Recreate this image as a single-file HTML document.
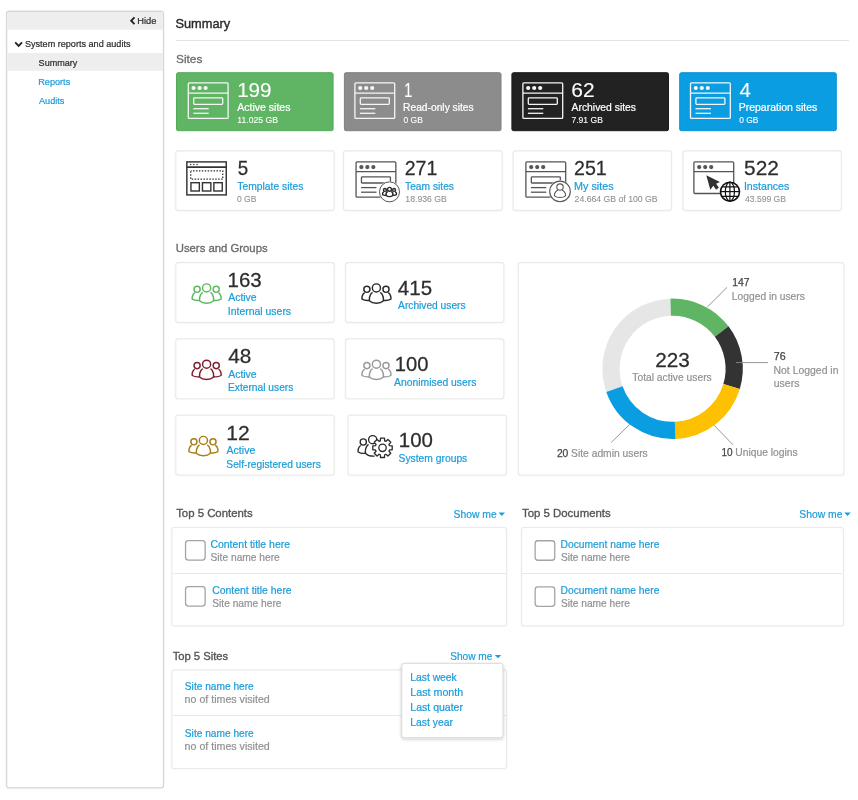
<!DOCTYPE html>
<html>
<head>
<meta charset="utf-8">
<title>Summary</title>
<style>
*{box-sizing:border-box;margin:0;padding:0}
html,body{width:858px;height:800px;overflow:hidden;background:#fff}
body{font-family:"Liberation Sans",sans-serif;color:#333;position:relative}
.a{position:absolute}
.t{position:absolute;white-space:nowrap;line-height:1;transform-origin:0 0;-webkit-text-stroke:.22px}
.hr{position:absolute;height:1px;background:#e8e8e8}
svg{position:absolute;overflow:visible}
</style>
</head>
<body><div id="wrap" style="position:absolute;left:0;top:0;width:858px;height:800px;will-change:transform">

<svg style="left:0;top:0" width="858" height="800"><rect x="6.7" y="11.75" width="156.7" height="776.3" rx="2.6" fill="none" stroke="#f3f3f3" stroke-width="2.4"/><rect x="6.7" y="11.4" width="156.7" height="776.4" rx="2.4" fill="#fff" stroke="#d4d4d4" stroke-width="1.1"/><path d="M7.25 29.7 V13.6 Q7.25 11.95 8.9 11.95 H161.2 Q162.85 11.95 162.85 13.6 V29.7 Z" fill="#eeeeee"/><rect x="7.25" y="52.9" width="155.6" height="17.9" fill="#eeeeee"/></svg>
<svg style="left:0;top:0" width="858" height="800"><g transform="translate(129,16)"><path d="M5.5 1.3 L2.1 4.75 L5.5 8.2" fill="none" stroke="#222" stroke-width="1.8"/></g></svg>
<div class="t" style="left:137px;top:16px;font-size:9.8px;color:#2d2d2d;transform:translate(0.24px,0) scaleX(0.9463);">Hide</div>
<svg style="left:0;top:0" width="858" height="800"><g transform="translate(14,40.3)"><path d="M1.2 2 L4.6 5.6 L8 2" fill="none" stroke="#222" stroke-width="1.8"/></g></svg>
<div class="t" style="left:24px;top:39px;font-size:9.8px;color:#2d2d2d;transform:translate(0.89px,0) scaleX(0.9280);">System reports and audits</div>
<div class="t" style="left:38px;top:58px;font-size:9.8px;color:#2d2d2d;transform:translate(0.59px,0) scaleX(0.9261);">Summary</div>
<div class="t" style="left:38px;top:77px;font-size:9.8px;color:#1b9dd9;transform:translate(0.25px,0) scaleX(0.9319);">Reports</div>
<div class="t" style="left:38px;top:96px;font-size:9.8px;color:#1b9dd9;transform:translate(0.98px,0) scaleX(0.9306);">Audits</div>
<div class="t" style="left:175px;top:17px;font-size:13.2px;color:#2b2b2b;transform:translate(0.42px,0) scaleX(0.9705);-webkit-text-stroke:.4px #2b2b2b;">Summary</div>
<div class="hr" style="left:176px;top:40px;width:673px;background:#e3e3e3"></div>
<div class="t" style="left:176px;top:54px;font-size:11.8px;color:#6a6a6a;transform:translate(0.06px,0) scaleX(1.0012);-webkit-text-stroke:.3px #6a6a6a;">Sites</div>
<svg style="left:0;top:0" width="858" height="800"><rect x="176.50" y="72.7" width="156.6" height="58" rx="1.6" fill="#60b565" stroke="#52ac57" stroke-width="1"/></svg>
<svg style="left:0;top:0" width="858" height="800"><g transform="translate(187.70,82.20)"><rect x=".6" y=".6" width="39.8" height="35.6" rx="1" fill="none" stroke="#f6f6f6" stroke-width="1.30"/><line x1=".6" y1="11.0" x2="40.4" y2="11.0" stroke="#f6f6f6" stroke-width="1.30"/><circle cx="5.9" cy="5.8" r="2.1" fill="#f6f6f6"/><circle cx="11.9" cy="5.8" r="2.1" fill="#f6f6f6"/><circle cx="17.9" cy="5.8" r="2.1" fill="#f6f6f6"/><rect x="6" y="15.70" width="29" height="6.50" rx=".8" fill="none" stroke="#f6f6f6" stroke-width="1.30"/><line x1="5.6" y1="26.50" x2="21" y2="26.50" stroke="#f6f6f6" stroke-width="1.30"/><line x1="5.6" y1="31.10" x2="21" y2="31.10" stroke="#f6f6f6" stroke-width="1.30"/></g></svg>
<div class="t" style="left:237px;top:79px;font-size:21px;color:#fff;transform:translate(0.13px,0) scaleX(0.9833);-webkit-text-stroke:.1px;">199</div>
<div class="t" style="left:237px;top:102px;font-size:11px;color:#fff;transform:translate(0.28px,0) scaleX(0.9564);">Active sites</div>
<div class="t" style="left:237px;top:116px;font-size:9px;color:#fff;transform:translate(0.34px,0) scaleX(0.9625);-webkit-text-stroke:.1px;">11.025 GB</div>
<svg style="left:0;top:0" width="858" height="800"><rect x="344.40" y="72.7" width="156.6" height="58" rx="1.6" fill="#8c8c8c" stroke="#808080" stroke-width="1"/></svg>
<svg style="left:0;top:0" width="858" height="800"><g transform="translate(354.30,82.20)"><rect x=".6" y=".6" width="39.8" height="35.6" rx="1" fill="none" stroke="#f6f6f6" stroke-width="1.30"/><line x1=".6" y1="11.0" x2="40.4" y2="11.0" stroke="#f6f6f6" stroke-width="1.30"/><circle cx="5.9" cy="5.8" r="2.1" fill="#f6f6f6"/><circle cx="11.9" cy="5.8" r="2.1" fill="#f6f6f6"/><circle cx="17.9" cy="5.8" r="2.1" fill="#f6f6f6"/><rect x="6" y="15.70" width="29" height="6.50" rx=".8" fill="none" stroke="#f6f6f6" stroke-width="1.30"/><line x1="5.6" y1="26.50" x2="21" y2="26.50" stroke="#f6f6f6" stroke-width="1.30"/><line x1="5.6" y1="31.10" x2="21" y2="31.10" stroke="#f6f6f6" stroke-width="1.30"/></g></svg>
<div class="t" style="left:403px;top:79px;font-size:21px;color:#fff;transform:translate(0.95px,0) scaleX(0.7179);-webkit-text-stroke:.1px;">1</div>
<div class="t" style="left:403px;top:102px;font-size:11px;color:#fff;transform:translate(0.06px,0) scaleX(0.9314);">Read-only sites</div>
<div class="t" style="left:403px;top:116px;font-size:9px;color:#fff;transform:translate(0.57px,0) scaleX(0.9399);-webkit-text-stroke:.1px;">0 GB</div>
<svg style="left:0;top:0" width="858" height="800"><rect x="511.90" y="72.7" width="156.6" height="58" rx="1.6" fill="#222222" stroke="#1c1c1c" stroke-width="1"/></svg>
<svg style="left:0;top:0" width="858" height="800"><g transform="translate(522.30,82.20)"><rect x=".6" y=".6" width="39.8" height="35.6" rx="1" fill="none" stroke="#f6f6f6" stroke-width="1.30"/><line x1=".6" y1="11.0" x2="40.4" y2="11.0" stroke="#f6f6f6" stroke-width="1.30"/><circle cx="5.9" cy="5.8" r="2.1" fill="#f6f6f6"/><circle cx="11.9" cy="5.8" r="2.1" fill="#f6f6f6"/><circle cx="17.9" cy="5.8" r="2.1" fill="#f6f6f6"/><rect x="6" y="15.70" width="29" height="6.50" rx=".8" fill="none" stroke="#f6f6f6" stroke-width="1.30"/><line x1="5.6" y1="26.50" x2="21" y2="26.50" stroke="#f6f6f6" stroke-width="1.30"/><line x1="5.6" y1="31.10" x2="21" y2="31.10" stroke="#f6f6f6" stroke-width="1.30"/></g></svg>
<div class="t" style="left:571px;top:79px;font-size:21px;color:#fff;transform:translate(0.34px,0) scaleX(0.9983);-webkit-text-stroke:.1px;">62</div>
<div class="t" style="left:571px;top:102px;font-size:11px;color:#fff;transform:translate(0.58px,0) scaleX(0.9405);">Archived sites</div>
<div class="t" style="left:571px;top:116px;font-size:9px;color:#fff;transform:translate(0.46px,0) scaleX(0.9506);-webkit-text-stroke:.1px;">7.91 GB</div>
<svg style="left:0;top:0" width="858" height="800"><rect x="679.70" y="72.7" width="156.6" height="58" rx="1.6" fill="#0a9de1" stroke="#0a93d3" stroke-width="1"/></svg>
<svg style="left:0;top:0" width="858" height="800"><g transform="translate(689.90,82.20)"><rect x=".6" y=".6" width="39.8" height="35.6" rx="1" fill="none" stroke="#f6f6f6" stroke-width="1.30"/><line x1=".6" y1="11.0" x2="40.4" y2="11.0" stroke="#f6f6f6" stroke-width="1.30"/><circle cx="5.9" cy="5.8" r="2.1" fill="#f6f6f6"/><circle cx="11.9" cy="5.8" r="2.1" fill="#f6f6f6"/><circle cx="17.9" cy="5.8" r="2.1" fill="#f6f6f6"/><rect x="6" y="15.70" width="29" height="6.50" rx=".8" fill="none" stroke="#f6f6f6" stroke-width="1.30"/><line x1="5.6" y1="26.50" x2="21" y2="26.50" stroke="#f6f6f6" stroke-width="1.30"/><line x1="5.6" y1="31.10" x2="21" y2="31.10" stroke="#f6f6f6" stroke-width="1.30"/></g></svg>
<div class="t" style="left:739px;top:79px;font-size:21px;color:#fff;transform:translate(0.43px,0) scaleX(0.9733);-webkit-text-stroke:.1px;">4</div>
<div class="t" style="left:738px;top:102px;font-size:11px;color:#fff;transform:translate(0.74px,0) scaleX(0.9515);">Preparation sites</div>
<div class="t" style="left:739px;top:116px;font-size:9px;color:#fff;transform:translate(0.27px,0) scaleX(0.9297);-webkit-text-stroke:.1px;">0 GB</div>
<svg style="left:0;top:0" width="858" height="800"><rect x="175.80" y="151.25" width="158.26" height="59.50" rx="2.6" fill="#fff" stroke="#f8f8f8" stroke-width="2.4"/><rect x="175.80" y="150.90" width="158.26" height="59.50" rx="2.4" fill="#fff" stroke="#eaeaea" stroke-width="1.1"/></svg>
<svg style="left:0;top:0" width="858" height="800"><rect x="343.60" y="151.25" width="158.56" height="59.50" rx="2.6" fill="#fff" stroke="#f8f8f8" stroke-width="2.4"/><rect x="343.60" y="150.90" width="158.56" height="59.50" rx="2.4" fill="#fff" stroke="#eaeaea" stroke-width="1.1"/></svg>
<svg style="left:0;top:0" width="858" height="800"><rect x="513.20" y="151.25" width="158.20" height="59.50" rx="2.6" fill="#fff" stroke="#f8f8f8" stroke-width="2.4"/><rect x="513.20" y="150.90" width="158.20" height="59.50" rx="2.4" fill="#fff" stroke="#eaeaea" stroke-width="1.1"/></svg>
<svg style="left:0;top:0" width="858" height="800"><rect x="683.00" y="151.25" width="158.30" height="59.50" rx="2.6" fill="#fff" stroke="#f8f8f8" stroke-width="2.4"/><rect x="683.00" y="150.90" width="158.30" height="59.50" rx="2.4" fill="#fff" stroke="#eaeaea" stroke-width="1.1"/></svg>
<svg style="left:0;top:0" width="858" height="800"><g transform="translate(186.05,161.1)"><rect x=".8" y=".8" width="39.4" height="33" fill="none" stroke="#333" stroke-width="1.45"/><line x1=".8" y1="6" x2="40.2" y2="6" stroke="#333" stroke-width="1.7"/><circle cx="4.6" cy="3.3" r=".75" fill="#333"/><circle cx="7.8" cy="3.3" r=".75" fill="#333"/><circle cx="11.0" cy="3.3" r=".75" fill="#333"/><rect x="4.7" y="9.8" width="32" height="8.3" fill="none" stroke="#333" stroke-width="1.25" stroke-dasharray="1.5 1.44" stroke-dashoffset=".7"/><rect x="4.9" y="21.6" width="8.4" height="8.3" fill="none" stroke="#333" stroke-width="1.4"/><rect x="16.4" y="21.6" width="8.4" height="8.3" fill="none" stroke="#333" stroke-width="1.4"/><rect x="27.8" y="21.6" width="8.4" height="8.3" fill="none" stroke="#333" stroke-width="1.4"/></g></svg>
<svg style="left:0;top:0" width="858" height="800"><g transform="translate(355.45,161.30)"><rect x=".6" y=".6" width="39.8" height="35.3" rx="1" fill="none" stroke="#555" stroke-width="1.30"/><line x1=".6" y1="10.4" x2="40.4" y2="10.4" stroke="#555" stroke-width="1.30"/><circle cx="5.9" cy="5.8" r="2.1" fill="#555"/><circle cx="11.9" cy="5.8" r="2.1" fill="#555"/><circle cx="17.9" cy="5.8" r="2.1" fill="#555"/><rect x="6" y="15.50" width="29" height="6.20" rx=".8" fill="none" stroke="#555" stroke-width="1.30"/><line x1="5.6" y1="26.30" x2="21" y2="26.30" stroke="#555" stroke-width="1.30"/><line x1="5.6" y1="30.90" x2="21" y2="30.90" stroke="#555" stroke-width="1.30"/><circle cx="34.05" cy="30.55" r="10.7" fill="#fff"/><circle cx="34.05" cy="30.55" r="10" fill="#fff" stroke="#555" stroke-width="1"/><g transform="translate(26.25,25.25) scale(.48)"><circle cx="16.2" cy="5.7" r="4.05" fill="#fff" stroke="#2a2a2a" stroke-width="2.9"/><circle cx="6.7" cy="7.1" r="3.05" fill="none" stroke="#2a2a2a" stroke-width="2.9"/><circle cx="25.8" cy="7.1" r="3.05" fill="none" stroke="#2a2a2a" stroke-width="2.9"/><path d="M4.4 10.5 C2 12 1.4 15.4 1.9 17 C3.8 18.2 6.6 18.6 9.4 18.2" fill="none" stroke="#2a2a2a" stroke-width="2.9"/><path d="M28.1 10.5 C30.5 12 31.1 15.4 30.6 17 C28.7 18.2 25.9 18.6 23.1 18.2" fill="none" stroke="#2a2a2a" stroke-width="2.9"/><path d="M12.3 10.2 C9.2 12.3 8.8 16.8 9.4 18.8 C12.4 21.7 20 21.7 23 18.8 C23.6 16.8 23.2 12.3 20.1 10.2" fill="none" stroke="#2a2a2a" stroke-width="2.9"/></g></g></svg>
<div class="t" style="left:404px;top:157px;font-size:21px;color:#2d2d2d;transform:translate(0.72px,0) scaleX(0.9285);-webkit-text-stroke:.27px;">271</div>
<svg style="left:0;top:0" width="858" height="800"><g transform="translate(525.30,161.30)"><rect x=".6" y=".6" width="39.8" height="35.3" rx="1" fill="none" stroke="#555" stroke-width="1.30"/><line x1=".6" y1="10.4" x2="40.4" y2="10.4" stroke="#555" stroke-width="1.30"/><circle cx="5.9" cy="5.8" r="2.1" fill="#555"/><circle cx="11.9" cy="5.8" r="2.1" fill="#555"/><circle cx="17.9" cy="5.8" r="2.1" fill="#555"/><rect x="6" y="15.50" width="29" height="6.20" rx=".8" fill="none" stroke="#555" stroke-width="1.30"/><line x1="5.6" y1="26.30" x2="21" y2="26.30" stroke="#555" stroke-width="1.30"/><line x1="5.6" y1="30.90" x2="21" y2="30.90" stroke="#555" stroke-width="1.30"/><circle cx="34.7" cy="30.1" r="11.1" fill="#fff"/><circle cx="34.7" cy="30.1" r="10.3" fill="#fff" stroke="#555" stroke-width="1.1"/><circle cx="34.7" cy="25.8" r="3.2" fill="none" stroke="#555" stroke-width="1.1"/><path d="M32.4 28.6 C29.7 30.1 28.8 33.2 29.2 34.6 C31.7 36.8 37.7 36.8 40.2 34.6 C40.6 33.2 39.7 30.1 37 28.6" fill="none" stroke="#555" stroke-width="1.1"/></g></svg>
<svg style="left:0;top:0" width="858" height="800"><g transform="translate(693.30,161.30)"><rect x=".6" y=".6" width="39.8" height="31.6" rx="1" fill="none" stroke="#555" stroke-width="1.30"/><line x1=".6" y1="10.4" x2="40.4" y2="10.4" stroke="#555" stroke-width="1.30"/><circle cx="5.9" cy="5.8" r="2.1" fill="#555"/><circle cx="11.9" cy="5.8" r="2.1" fill="#555"/><circle cx="17.9" cy="5.8" r="2.1" fill="#555"/><path d="M13 14 L26.6 20.6 L22.8 22.4 L25.6 26.2 L22.8 28.5 L20 24.5 L17 28.5 Z" fill="#333"/><circle cx="36.7" cy="30.4" r="9.5" fill="#fff" stroke="#111" stroke-width="1.6"/><ellipse cx="36.6" cy="30.3" rx="4.6" ry="9.4" fill="none" stroke="#111" stroke-width="1.2"/><line x1="36.6" y1="20.9" x2="36.6" y2="39.7" stroke="#111" stroke-width="1.2"/><line x1="27.2" y1="30.3" x2="46" y2="30.3" stroke="#111" stroke-width="1.2"/><path d="M28.6 25.6 H44.6 M28.6 35 H44.6" stroke="#111" stroke-width="1.2" fill="none"/></g></svg>
<div class="t" style="left:237px;top:157px;font-size:21px;color:#2d2d2d;transform:translate(0.65px,0) scaleX(0.8939);-webkit-text-stroke:.27px;">5</div>
<div class="t" style="left:237px;top:181px;font-size:11px;color:#1b9dd9;transform:translate(0.27px,0) scaleX(0.9396);">Template sites</div>
<div class="t" style="left:236px;top:195px;font-size:9px;color:#929292;transform:translate(0.97px,0) scaleX(0.9450);-webkit-text-stroke:.1px;">0 GB</div>
<div class="t" style="left:405px;top:181px;font-size:11px;color:#1b9dd9;transform:translate(0.07px,0) scaleX(0.9295);">Team sites</div>
<div class="t" style="left:405px;top:195px;font-size:9px;color:#929292;transform:translate(0.34px,0) scaleX(0.9625);-webkit-text-stroke:.1px;">18.936 GB</div>
<div class="t" style="left:574px;top:157px;font-size:21px;color:#2d2d2d;transform:translate(0.01px,0) scaleX(0.9346);-webkit-text-stroke:.27px;">251</div>
<div class="t" style="left:574px;top:181px;font-size:11px;color:#1b9dd9;transform:translate(0.12px,0) scaleX(0.9786);">My sites</div>
<div class="t" style="left:574px;top:195px;font-size:9px;color:#929292;transform:translate(0.56px,0) scaleX(0.9656);-webkit-text-stroke:.1px;">24.664 GB of 100 GB</div>
<div class="t" style="left:744px;top:157px;font-size:21px;color:#2d2d2d;transform:translate(0.07px,0) scaleX(0.9927);-webkit-text-stroke:.27px;">522</div>
<div class="t" style="left:743px;top:181px;font-size:11px;color:#1b9dd9;transform:translate(0.92px,0) scaleX(0.9634);">Instances</div>
<div class="t" style="left:745px;top:195px;font-size:9px;color:#929292;transform:translate(0.00px,0) scaleX(0.9516);-webkit-text-stroke:.1px;">43.599 GB</div>
<div class="t" style="left:175px;top:243px;font-size:11.8px;color:#6a6a6a;transform:translate(0.73px,0) scaleX(0.9596);-webkit-text-stroke:.33px #6a6a6a;">Users and Groups</div>
<svg style="left:0;top:0" width="858" height="800"><rect x="175.80" y="262.95" width="158.30" height="59.80" rx="2.6" fill="#fff" stroke="#f8f8f8" stroke-width="2.4"/><rect x="175.80" y="262.60" width="158.30" height="59.80" rx="2.4" fill="#fff" stroke="#eaeaea" stroke-width="1.1"/></svg>
<svg style="left:0;top:0" width="858" height="800"><rect x="345.60" y="262.95" width="158.20" height="59.80" rx="2.6" fill="#fff" stroke="#f8f8f8" stroke-width="2.4"/><rect x="345.60" y="262.60" width="158.20" height="59.80" rx="2.4" fill="#fff" stroke="#eaeaea" stroke-width="1.1"/></svg>
<svg style="left:0;top:0" width="858" height="800"><rect x="175.80" y="339.25" width="158.30" height="59.80" rx="2.6" fill="#fff" stroke="#f8f8f8" stroke-width="2.4"/><rect x="175.80" y="338.90" width="158.30" height="59.80" rx="2.4" fill="#fff" stroke="#eaeaea" stroke-width="1.1"/></svg>
<svg style="left:0;top:0" width="858" height="800"><rect x="345.60" y="339.25" width="158.20" height="59.80" rx="2.6" fill="#fff" stroke="#f8f8f8" stroke-width="2.4"/><rect x="345.60" y="338.90" width="158.20" height="59.80" rx="2.4" fill="#fff" stroke="#eaeaea" stroke-width="1.1"/></svg>
<svg style="left:0;top:0" width="858" height="800"><rect x="175.80" y="415.55" width="158.30" height="59.80" rx="2.6" fill="#fff" stroke="#f8f8f8" stroke-width="2.4"/><rect x="175.80" y="415.20" width="158.30" height="59.80" rx="2.4" fill="#fff" stroke="#eaeaea" stroke-width="1.1"/></svg>
<svg style="left:0;top:0" width="858" height="800"><rect x="348.00" y="415.55" width="158.30" height="59.80" rx="2.6" fill="#fff" stroke="#f8f8f8" stroke-width="2.4"/><rect x="348.00" y="415.20" width="158.30" height="59.80" rx="2.4" fill="#fff" stroke="#eaeaea" stroke-width="1.1"/></svg>
<svg style="left:0;top:0" width="858" height="800"><g transform="translate(190.40,282.20)"><circle cx="16.2" cy="5.7" r="4.05" fill="#fff" stroke="#5cb85c" stroke-width="1.45"/><circle cx="6.7" cy="7.1" r="3.05" fill="none" stroke="#5cb85c" stroke-width="1.45"/><circle cx="25.8" cy="7.1" r="3.05" fill="none" stroke="#5cb85c" stroke-width="1.45"/><path d="M4.4 10.5 C2 12 1.4 15.4 1.9 17 C3.8 18.2 6.6 18.6 9.4 18.2" fill="none" stroke="#5cb85c" stroke-width="1.45"/><path d="M28.1 10.5 C30.5 12 31.1 15.4 30.6 17 C28.7 18.2 25.9 18.6 23.1 18.2" fill="none" stroke="#5cb85c" stroke-width="1.45"/><path d="M12.3 10.2 C9.2 12.3 8.8 16.8 9.4 18.8 C12.4 21.7 20 21.7 23 18.8 C23.6 16.8 23.2 12.3 20.1 10.2" fill="none" stroke="#5cb85c" stroke-width="1.45"/></g></svg>
<svg style="left:0;top:0" width="858" height="800"><g transform="translate(360.20,282.20)"><circle cx="16.2" cy="5.7" r="4.05" fill="#fff" stroke="#2a2a2a" stroke-width="1.45"/><circle cx="6.7" cy="7.1" r="3.05" fill="none" stroke="#2a2a2a" stroke-width="1.45"/><circle cx="25.8" cy="7.1" r="3.05" fill="none" stroke="#2a2a2a" stroke-width="1.45"/><path d="M4.4 10.5 C2 12 1.4 15.4 1.9 17 C3.8 18.2 6.6 18.6 9.4 18.2" fill="none" stroke="#2a2a2a" stroke-width="1.45"/><path d="M28.1 10.5 C30.5 12 31.1 15.4 30.6 17 C28.7 18.2 25.9 18.6 23.1 18.2" fill="none" stroke="#2a2a2a" stroke-width="1.45"/><path d="M12.3 10.2 C9.2 12.3 8.8 16.8 9.4 18.8 C12.4 21.7 20 21.7 23 18.8 C23.6 16.8 23.2 12.3 20.1 10.2" fill="none" stroke="#2a2a2a" stroke-width="1.45"/></g></svg>
<svg style="left:0;top:0" width="858" height="800"><g transform="translate(190.40,358.50)"><circle cx="16.2" cy="5.7" r="4.05" fill="#fff" stroke="#7e1f2b" stroke-width="1.45"/><circle cx="6.7" cy="7.1" r="3.05" fill="none" stroke="#7e1f2b" stroke-width="1.45"/><circle cx="25.8" cy="7.1" r="3.05" fill="none" stroke="#7e1f2b" stroke-width="1.45"/><path d="M4.4 10.5 C2 12 1.4 15.4 1.9 17 C3.8 18.2 6.6 18.6 9.4 18.2" fill="none" stroke="#7e1f2b" stroke-width="1.45"/><path d="M28.1 10.5 C30.5 12 31.1 15.4 30.6 17 C28.7 18.2 25.9 18.6 23.1 18.2" fill="none" stroke="#7e1f2b" stroke-width="1.45"/><path d="M12.3 10.2 C9.2 12.3 8.8 16.8 9.4 18.8 C12.4 21.7 20 21.7 23 18.8 C23.6 16.8 23.2 12.3 20.1 10.2" fill="none" stroke="#7e1f2b" stroke-width="1.45"/></g></svg>
<svg style="left:0;top:0" width="858" height="800"><g transform="translate(360.20,358.50)"><circle cx="16.2" cy="5.7" r="4.05" fill="#fff" stroke="#9a9a9a" stroke-width="1.45"/><circle cx="6.7" cy="7.1" r="3.05" fill="none" stroke="#9a9a9a" stroke-width="1.45"/><circle cx="25.8" cy="7.1" r="3.05" fill="none" stroke="#9a9a9a" stroke-width="1.45"/><path d="M4.4 10.5 C2 12 1.4 15.4 1.9 17 C3.8 18.2 6.6 18.6 9.4 18.2" fill="none" stroke="#9a9a9a" stroke-width="1.45"/><path d="M28.1 10.5 C30.5 12 31.1 15.4 30.6 17 C28.7 18.2 25.9 18.6 23.1 18.2" fill="none" stroke="#9a9a9a" stroke-width="1.45"/><path d="M12.3 10.2 C9.2 12.3 8.8 16.8 9.4 18.8 C12.4 21.7 20 21.7 23 18.8 C23.6 16.8 23.2 12.3 20.1 10.2" fill="none" stroke="#9a9a9a" stroke-width="1.45"/></g></svg>
<svg style="left:0;top:0" width="858" height="800"><g transform="translate(187.20,434.70)"><circle cx="16.2" cy="5.7" r="4.05" fill="#fff" stroke="#a67e12" stroke-width="1.45"/><circle cx="6.7" cy="7.1" r="3.05" fill="none" stroke="#a67e12" stroke-width="1.45"/><circle cx="25.8" cy="7.1" r="3.05" fill="none" stroke="#a67e12" stroke-width="1.45"/><path d="M4.4 10.5 C2 12 1.4 15.4 1.9 17 C3.8 18.2 6.6 18.6 9.4 18.2" fill="none" stroke="#a67e12" stroke-width="1.45"/><path d="M28.1 10.5 C30.5 12 31.1 15.4 30.6 17 C28.7 18.2 25.9 18.6 23.1 18.2" fill="none" stroke="#a67e12" stroke-width="1.45"/><path d="M12.3 10.2 C9.2 12.3 8.8 16.8 9.4 18.8 C12.4 21.7 20 21.7 23 18.8 C23.6 16.8 23.2 12.3 20.1 10.2" fill="none" stroke="#a67e12" stroke-width="1.45"/></g></svg>
<svg style="left:0;top:0" width="858" height="800"><g transform="translate(356.7,434.8)"><circle cx="6.6" cy="7.2" r="3.1" fill="none" stroke="#2a2a2a" stroke-width="1.35"/><path d="M4 10.7 C1.6 12.2 1 15.6 1.5 17.2 C3.4 18.4 5.8 18.8 8.4 18.5" fill="none" stroke="#2a2a2a" stroke-width="1.35"/><circle cx="16" cy="4.9" r="4.1" fill="#fff" stroke="#2a2a2a" stroke-width="1.35"/><path d="M11.8 9.6 C8.6 12 8.2 16.6 8.9 18.6 C11 20.7 14.5 21.6 18 21.3" fill="none" stroke="#2a2a2a" stroke-width="1.35"/><path d="M23.64 6.03 L23.83 3.30 L27.77 3.30 L27.96 6.03 L29.21 6.54 L31.27 4.75 L34.05 7.53 L32.26 9.59 L32.77 10.84 L35.50 11.03 L35.50 14.97 L32.77 15.16 L32.26 16.41 L34.05 18.47 L31.27 21.25 L29.21 19.46 L27.96 19.97 L27.77 22.70 L23.83 22.70 L23.64 19.97 L22.39 19.46 L20.33 21.25 L17.55 18.47 L19.34 16.41 L18.83 15.16 L16.10 14.97 L16.10 11.03 L18.83 10.84 L19.34 9.59 L17.55 7.53 L20.33 4.75 L22.39 6.54 Z" fill="#fff" stroke="#2a2a2a" stroke-width="1.3" stroke-linejoin="round"/><circle cx="25.8" cy="13.0" r="3.7" fill="#fff" stroke="#2a2a2a" stroke-width="1.3"/></g></svg>
<div class="t" style="left:227px;top:269px;font-size:21px;color:#2d2d2d;transform:translate(0.54px,0) scaleX(0.9749);-webkit-text-stroke:.27px;">163</div>
<div class="t" style="left:228px;top:292px;font-size:11px;color:#1b9dd9;transform:translate(0.18px,0) scaleX(0.9509);">Active</div>
<div class="t" style="left:227px;top:306px;font-size:11px;color:#1b9dd9;transform:translate(0.84px,0) scaleX(0.9489);">Internal users</div>
<div class="t" style="left:397px;top:277px;font-size:21px;color:#2d2d2d;transform:translate(0.83px,0) scaleX(0.9770);-webkit-text-stroke:.27px;">415</div>
<div class="t" style="left:398px;top:300px;font-size:11px;color:#1b9dd9;transform:translate(0.08px,0) scaleX(0.9277);">Archived users</div>
<div class="t" style="left:228px;top:345px;font-size:21px;color:#2d2d2d;transform:translate(0.22px,0) scaleX(0.9880);-webkit-text-stroke:.27px;">48</div>
<div class="t" style="left:228px;top:369px;font-size:11px;color:#1b9dd9;transform:translate(0.18px,0) scaleX(0.9509);">Active</div>
<div class="t" style="left:227px;top:382px;font-size:11px;color:#1b9dd9;transform:translate(0.96px,0) scaleX(0.9303);">External users</div>
<div class="t" style="left:394px;top:353px;font-size:21px;color:#2d2d2d;transform:translate(0.66px,0) scaleX(0.9627);-webkit-text-stroke:.27px;">100</div>
<div class="t" style="left:394px;top:377px;font-size:11px;color:#1b9dd9;transform:translate(0.08px,0) scaleX(0.9413);">Anonimised users</div>
<div class="t" style="left:226px;top:422px;font-size:21px;color:#2d2d2d;transform:translate(0.19px,0) scaleX(1.0047);-webkit-text-stroke:.27px;">12</div>
<div class="t" style="left:226px;top:445px;font-size:11px;color:#1b9dd9;transform:translate(0.58px,0) scaleX(0.9577);">Active</div>
<div class="t" style="left:226px;top:459px;font-size:11px;color:#1b9dd9;transform:translate(0.34px,0) scaleX(0.9305);">Self-registered users</div>
<div class="t" style="left:398px;top:429px;font-size:21px;color:#2d2d2d;transform:translate(0.84px,0) scaleX(0.9749);-webkit-text-stroke:.27px;">100</div>
<div class="t" style="left:398px;top:453px;font-size:11px;color:#1b9dd9;transform:translate(0.53px,0) scaleX(0.9370);">System groups</div>
<svg style="left:0;top:0" width="858" height="800"><rect x="518.35" y="262.95" width="325.45" height="212.40" rx="2.6" fill="#fff" stroke="#f8f8f8" stroke-width="2.4"/><rect x="518.35" y="262.60" width="325.45" height="212.40" rx="2.4" fill="#fff" stroke="#eaeaea" stroke-width="1.1"/></svg>
<svg style="left:0;top:0" width="858" height="800" viewBox="0 0 858 800"><path d="M614.43 389.06 A61.60 61.60 0 0 1 670.67 307.23" fill="none" stroke="#e6e6e6" stroke-width="17.2"/><path d="M670.67 307.23 A61.60 61.60 0 0 1 721.67 331.56" fill="none" stroke="#60b565" stroke-width="17.2"/><path d="M721.67 331.56 A61.60 61.60 0 0 1 731.57 386.60" fill="none" stroke="#333333" stroke-width="17.2"/><path d="M731.57 386.60 A61.60 61.60 0 0 1 675.18 430.35" fill="none" stroke="#fdc101" stroke-width="17.2"/><path d="M675.18 430.35 A61.60 61.60 0 0 1 614.43 389.06" fill="none" stroke="#0a9de1" stroke-width="17.2"/><line x1="707.3" y1="307.0" x2="727.0" y2="287.4" stroke="#8a8a8a" stroke-width=".9"/><line x1="736.0" y1="362.6" x2="768.0" y2="362.6" stroke="#8a8a8a" stroke-width=".9"/><line x1="714.0" y1="425.2" x2="733.2" y2="445.0" stroke="#8a8a8a" stroke-width=".9"/><line x1="630.6" y1="423.5" x2="611.3" y2="442.4" stroke="#8a8a8a" stroke-width=".9"/></svg>
<div class="t" style="left:655px;top:349px;font-size:21px;color:#2d2d2d;transform:translate(0.26px,0) scaleX(0.9861);-webkit-text-stroke:.27px;">223</div>
<div class="t" style="left:632px;top:372px;font-size:11px;color:#929292;transform:translate(0.27px,0) scaleX(0.9351);">Total active users</div>
<div class="t" style="left:732px;top:277px;font-size:10.5px;color:#444;transform:translate(0.21px,0) scaleX(0.9820);-webkit-text-stroke:.25px #444;">147</div>
<div class="t" style="left:731px;top:291px;font-size:11px;color:#929292;transform:translate(0.86px,0) scaleX(0.9327);">Logged in users</div>
<div class="t" style="left:773px;top:351px;font-size:10.5px;color:#444;transform:translate(0.85px,0) scaleX(1.0207);-webkit-text-stroke:.25px #444;">76</div>
<div class="t" style="left:773px;top:365px;font-size:11px;color:#929292;transform:translate(0.54px,0) scaleX(0.9480);">Not Logged in</div>
<div class="t" style="left:773px;top:378px;font-size:11px;color:#929292;transform:translate(0.72px,0) scaleX(0.9579);">users</div>
<div class="t" style="left:556px;top:448px;font-size:10.5px;color:#444;transform:translate(0.88px,0) scaleX(0.9776);-webkit-text-stroke:.25px #444;">20</div>
<div class="t" style="left:571px;top:448px;font-size:11px;color:#929292;transform:translate(0.03px,0) scaleX(0.9367);">Site admin users</div>
<div class="t" style="left:721px;top:447px;font-size:10.5px;color:#444;transform:translate(0.44px,0) scaleX(0.9552);-webkit-text-stroke:.25px #444;">10</div>
<div class="t" style="left:735px;top:447px;font-size:11px;color:#929292;transform:translate(0.20px,0) scaleX(0.9387);">Unique logins</div>
<div class="t" style="left:176px;top:507px;font-size:11.7px;color:#555;transform:translate(0.14px,0) scaleX(0.9734);-webkit-text-stroke:.35px #555;">Top 5 Contents</div>
<div class="t" style="left:453px;top:509px;font-size:11px;color:#1b9dd9;transform:translate(0.53px,0) scaleX(0.9406);">Show me</div>
<svg style="left:0;top:0" width="858" height="800"><g transform="translate(498.60,512.60)"><path d="M0 0 H6.4 L3.2 3.4 Z" fill="#1b9dd9"/></g></svg>
<svg style="left:0;top:0" width="858" height="800"><rect x="171.90" y="527.85" width="334.60" height="98.30" rx="2.6" fill="#fff" stroke="#f8f8f8" stroke-width="2.4"/><rect x="171.90" y="527.50" width="334.60" height="98.30" rx="2.4" fill="#fff" stroke="#eaeaea" stroke-width="1.1"/></svg>
<div class="hr" style="left:172.5px;top:573px;width:333px"></div>
<svg style="left:0;top:0" width="858" height="800"><rect x="185.55" y="540.65" width="19.6" height="19.5" rx="2.8" fill="#fff" stroke="#a4a4a4" stroke-width="1.3"/></svg>
<svg style="left:0;top:0" width="858" height="800"><rect x="185.55" y="586.60" width="19.6" height="19.5" rx="2.8" fill="#fff" stroke="#a4a4a4" stroke-width="1.3"/></svg>
<div class="t" style="left:210px;top:539px;font-size:11px;color:#1b9dd9;transform:translate(0.47px,0) scaleX(0.9489);">Content title here</div>
<div class="t" style="left:210px;top:552px;font-size:11px;color:#929292;transform:translate(0.54px,0) scaleX(0.9279);">Site name here</div>
<div class="t" style="left:212px;top:585px;font-size:11px;color:#1b9dd9;transform:translate(0.17px,0) scaleX(0.9489);">Content title here</div>
<div class="t" style="left:212px;top:598px;font-size:11px;color:#929292;transform:translate(0.24px,0) scaleX(0.9279);">Site name here</div>
<div class="t" style="left:522px;top:507px;font-size:11.7px;color:#555;transform:translate(0.04px,0) scaleX(0.9743);-webkit-text-stroke:.35px #555;">Top 5 Documents</div>
<div class="t" style="left:799px;top:509px;font-size:11px;color:#1b9dd9;transform:translate(0.33px,0) scaleX(0.9406);">Show me</div>
<svg style="left:0;top:0" width="858" height="800"><g transform="translate(844.30,512.60)"><path d="M0 0 H6.4 L3.2 3.4 Z" fill="#1b9dd9"/></g></svg>
<svg style="left:0;top:0" width="858" height="800"><rect x="521.60" y="527.85" width="321.80" height="98.30" rx="2.6" fill="#fff" stroke="#f8f8f8" stroke-width="2.4"/><rect x="521.60" y="527.50" width="321.80" height="98.30" rx="2.4" fill="#fff" stroke="#eaeaea" stroke-width="1.1"/></svg>
<div class="hr" style="left:522.4px;top:573px;width:320px"></div>
<svg style="left:0;top:0" width="858" height="800"><rect x="535.15" y="540.75" width="19.6" height="19.5" rx="2.8" fill="#fff" stroke="#a4a4a4" stroke-width="1.3"/></svg>
<svg style="left:0;top:0" width="858" height="800"><rect x="535.15" y="586.90" width="19.6" height="19.5" rx="2.8" fill="#fff" stroke="#a4a4a4" stroke-width="1.3"/></svg>
<div class="t" style="left:560px;top:539px;font-size:11px;color:#1b9dd9;transform:translate(0.56px,0) scaleX(0.9340);">Document name here</div>
<div class="t" style="left:560px;top:552px;font-size:11px;color:#929292;transform:translate(0.94px,0) scaleX(0.9251);">Site name here</div>
<div class="t" style="left:560px;top:585px;font-size:11px;color:#1b9dd9;transform:translate(0.56px,0) scaleX(0.9340);">Document name here</div>
<div class="t" style="left:560px;top:598px;font-size:11px;color:#929292;transform:translate(0.94px,0) scaleX(0.9251);">Site name here</div>
<div class="t" style="left:172px;top:650px;font-size:11.7px;color:#555;transform:translate(0.65px,0) scaleX(0.9608);-webkit-text-stroke:.35px #555;">Top 5 Sites</div>
<div class="t" style="left:450px;top:651px;font-size:11px;color:#1b9dd9;transform:translate(0.14px,0) scaleX(0.9205);">Show me</div>
<svg style="left:0;top:0" width="858" height="800"><g transform="translate(494.80,654.90)"><path d="M0 0 H6.4 L3.2 3.4 Z" fill="#1b9dd9"/></g></svg>
<svg style="left:0;top:0" width="858" height="800"><rect x="171.90" y="670.25" width="334.60" height="98.60" rx="2.6" fill="#fff" stroke="#f8f8f8" stroke-width="2.4"/><rect x="171.90" y="669.90" width="334.60" height="98.60" rx="2.4" fill="#fff" stroke="#eaeaea" stroke-width="1.1"/></svg>
<div class="hr" style="left:172.5px;top:715px;width:333px"></div>
<div class="t" style="left:184px;top:681px;font-size:11px;color:#1b9dd9;transform:translate(0.84px,0) scaleX(0.9238);">Site name here</div>
<div class="t" style="left:184px;top:694px;font-size:11px;color:#929292;transform:translate(0.59px,0) scaleX(0.9677);">no of times visited</div>
<div class="t" style="left:184px;top:728px;font-size:11px;color:#1b9dd9;transform:translate(0.84px,0) scaleX(0.9238);">Site name here</div>
<div class="t" style="left:184px;top:741px;font-size:11px;color:#929292;transform:translate(0.59px,0) scaleX(0.9677);">no of times visited</div>
<svg style="left:0;top:0" width="858" height="800"><defs><filter id="ds" x="-20%" y="-20%" width="140%" height="150%"><feDropShadow dx="0" dy="1.2" stdDeviation="1.6" flood-color="#000" flood-opacity=".22"/></filter></defs><rect x="401.8" y="663.3" width="101.2" height="74.4" rx="2.4" fill="#fff" stroke="#d9d9d9" stroke-width="1" filter="url(#ds)"/></svg>
<div class="t" style="left:410px;top:672px;font-size:11px;color:#1b9dd9;transform:translate(0.36px,0) scaleX(0.9354);">Last week</div>
<div class="t" style="left:410px;top:687px;font-size:11px;color:#1b9dd9;transform:translate(0.32px,0) scaleX(0.9715);">Last month</div>
<div class="t" style="left:410px;top:702px;font-size:11px;color:#1b9dd9;transform:translate(0.34px,0) scaleX(0.9564);">Last quater</div>
<div class="t" style="left:410px;top:717px;font-size:11px;color:#1b9dd9;transform:translate(0.35px,0) scaleX(0.9397);">Last year</div>
</div></body>
</html>
